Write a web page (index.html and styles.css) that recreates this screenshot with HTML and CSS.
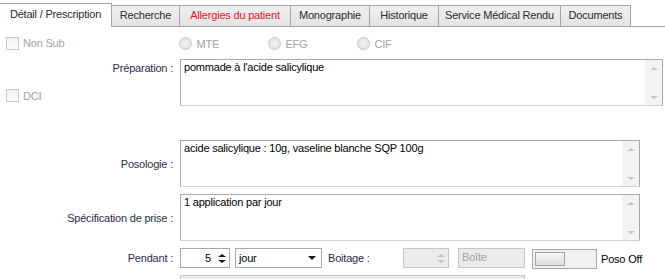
FILE: index.html
```html
<!DOCTYPE html>
<html lang="fr">
<head>
    <meta charset="UTF-8">
    <title>Détail / Prescription</title>
    <link rel="stylesheet" href="styles.css">
</head>
<body>
    <!-- onglets -->
    <div class="tabs">
        <div class="tab active" style="width:112px">Détail / Prescription</div>
        <div class="tab" style="width:69px">Recherche</div>
        <div class="tab alert" style="width:112px">Allergies du patient</div>
        <div class="tab" style="width:80px">Monographie</div>
        <div class="tab" style="width:70px">Historique</div>
        <div class="tab" style="width:123px">Service Médical Rendu</div>
        <div class="tab" style="width:71px">Documents</div>
    </div>

    <div class="panel">
        <!-- options -->
        <div class="options">
            <label class="check off"><span class="box"></span>Non Sub</label>
            <div class="radios">
                <label class="radio off"><span class="dot"></span>MTE</label>
                <label class="radio off"><span class="dot"></span>EFG</label>
                <label class="radio off"><span class="dot"></span>CIF</label>
            </div>
        </div>

        <div class="form">
            <div class="label-cell prep">
                <span class="lbl">Préparation :</span>
                <label class="check off"><span class="box"></span>DCI</label>
            </div>
            <div class="memo wide">
                <div class="memo-text">pommade à l'acide salicylique</div>
                <div class="scroll"><span class="up"></span><span class="down"></span></div>
            </div>

            <div class="label-cell mid posologie"><span class="lbl">Posologie :</span></div>
            <div class="memo posologie">
                <div class="memo-text">acide salicylique : 10g, vaseline blanche SQP 100g</div>
                <div class="scroll"><span class="up"></span><span class="down"></span></div>
            </div>

            <div class="label-cell mid"><span class="lbl">Spécification de prise :</span></div>
            <div class="memo">
                <div class="memo-text">1 application par jour</div>
                <div class="scroll"><span class="up"></span><span class="down"></span></div>
            </div>

            <div class="label-cell mid"><span class="lbl">Pendant :</span></div>
            <div class="inline-row">
                <div class="spin">
                    <span class="val">5</span>
                    <span class="arrows"><span class="up"></span><span class="down"></span></span>
                </div>
                <div class="combo">
                    <span>jour</span>
                    <span class="caret"></span>
                </div>
                <span class="lbl boitage">Boitage :</span>
                <div class="spin disabled">
                    <span class="val"></span>
                    <span class="arrows"><span class="up"></span><span class="down"></span></span>
                </div>
                <div class="field disabled">Boîte</div>
                <div class="toggle"><span class="thumb"></span></div>
                <span class="toggle-text">Poso Off</span>
            </div>

            <div class="label-cell"></div>
            <div class="next-row"></div>
        </div>
    </div>
</body>
</html>
```

FILE: styles.css
```css
/* base */
body {
    margin: 0;
    background: #ffffff;
    font-family: "Liberation Sans", Arial, sans-serif;
    font-size: 11px;
    letter-spacing: -0.2px;
    color: #000;
    width: 665px;
    height: 279px;
    overflow: hidden;
}

/* onglets */
.tabs {
    display: flex;
    align-items: flex-end;
    height: 26px;
    border-bottom: 1px solid #a5a5a5;
}

.tab {
    box-sizing: border-box;
    height: 21px;
    margin-left: -1px;
    border: 1px solid #a5a5a5;
    border-bottom: none;
    background: linear-gradient(#efeff1, #e4e4e7);
    color: #2b2b2b;
    text-align: center;
    line-height: 19px;
    white-space: nowrap;
}

.tab.active {
    height: 24px;
    margin-left: 0;
    margin-bottom: -1px;
    border-left: none;
    background: #fff;
    line-height: 21px;
    padding-bottom: 1px;
    position: relative;
    z-index: 1;
}

.tab.alert {
    color: #e8141c;
}

/* contenu */
.panel {
    padding-top: 9px;
}

.options {
    display: flex;
    align-items: center;
    height: 14px;
    padding-left: 6px;
}

.radios {
    display: flex;
    margin-left: 115px;
    margin-top: 1px;
}

.check, .radio {
    display: flex;
    align-items: center;
    gap: 4px;
}

.radio {
    width: 89px;
}

.off {
    color: #a3a3a3;
}

.box {
    box-sizing: border-box;
    width: 13px;
    height: 13px;
    border: 1px solid #c9c9c9;
    background: linear-gradient(#f1f1f1, #fdfdfd);
}

.dot {
    box-sizing: border-box;
    width: 13px;
    height: 13px;
    border-radius: 50%;
    border: 1px solid #c6c6c6;
    background: radial-gradient(circle, #f4f4f4 0, #e2e2e2 70%);
}

.form {
    display: grid;
    grid-template-columns: 180px 1fr;
    row-gap: 7px;
    margin-top: 9px;
}

.label-cell {
    display: flex;
    justify-content: flex-end;
    padding-right: 7px;
}

.label-cell.mid {
    align-items: center;
}

.label-cell.posologie {
    margin-top: 27px;
}

.lbl {
    color: #1f2e4a;
    white-space: nowrap;
}

.prep {
    flex-direction: column;
    justify-content: flex-start;
    align-items: flex-end;
    padding-top: 3px;
}

.prep .check {
    align-self: flex-start;
    margin-left: 6px;
    margin-top: 15px;
}

/* zones de texte */
.memo {
    box-sizing: border-box;
    display: flex;
    height: 47px;
    width: 460px;
    border: 1px solid #a9a9ad;
    border-bottom-color: #d3d3d6;
    background: #fff;
}

.memo.wide {
    width: 483px;
}

.memo.posologie {
    margin-top: 27px;
}

.memo-text {
    flex: 1;
    padding: 1px 3px;
    white-space: nowrap;
}

.scroll {
    width: 17px;
    background: #f3f3f6;
    display: flex;
    flex-direction: column;
    justify-content: space-between;
    align-items: center;
    padding: 7px 0 6px;
}

.scroll .up, .arrows .up {
    width: 0;
    height: 0;
    border-left: 4px solid transparent;
    border-right: 4px solid transparent;
    border-bottom: 3px solid #c4c4c8;
}

.scroll .down, .arrows .down {
    width: 0;
    height: 0;
    border-left: 4px solid transparent;
    border-right: 4px solid transparent;
    border-top: 3px solid #c4c4c8;
}

/* ligne pendant */
.inline-row {
    display: flex;
    align-items: center;
    height: 20px;
}

.spin, .combo, .field {
    box-sizing: border-box;
    height: 20px;
    border: 1px solid #a9a9ad;
    display: flex;
    align-items: center;
}

.spin {
    width: 50px;
    justify-content: flex-end;
    padding-right: 3px;
}

.spin .val {
    margin-right: 7px;
}

.arrows {
    display: flex;
    flex-direction: column;
    gap: 3px;
}

.spin:not(.disabled) .arrows .up {
    border-bottom-color: #1a1a1a;
}

.spin:not(.disabled) .arrows .down {
    border-top-color: #1a1a1a;
}

.combo {
    width: 87px;
    margin-left: 5px;
    justify-content: space-between;
    padding: 0 5px 0 3px;
}

.caret {
    width: 0;
    height: 0;
    border-left: 4px solid transparent;
    border-right: 4px solid transparent;
    border-top: 4px solid #1a1a1a;
}

.boitage {
    margin-left: 6px;
    width: 75px;
}

.disabled {
    background: #ebebed;
    border-color: #c6c6c8;
    color: #a3a3a3;
}

.spin.disabled {
    width: 46px;
}

.field {
    width: 67px;
    margin-left: 9px;
    padding-left: 3px;
    align-items: flex-start;
    padding-top: 2px;
}

.toggle {
    box-sizing: border-box;
    width: 65px;
    height: 20px;
    margin-left: 7px;
    margin-top: 2px;
    border: 1px solid #a9a9ad;
    background: #f1f1f3;
    padding: 2px;
}

.toggle .thumb {
    display: block;
    box-sizing: border-box;
    width: 30px;
    height: 14px;
    border: 1px solid #a3a3a6;
    background: linear-gradient(#f8f8f8, #dcdcdf);
}

.toggle-text {
    margin-left: 4px;
    margin-top: 2px;
}

.next-row {
    box-sizing: border-box;
    width: 345px;
    height: 20px;
    border: 1px solid #c6c6c8;
    background: #ebebed;
}
```
